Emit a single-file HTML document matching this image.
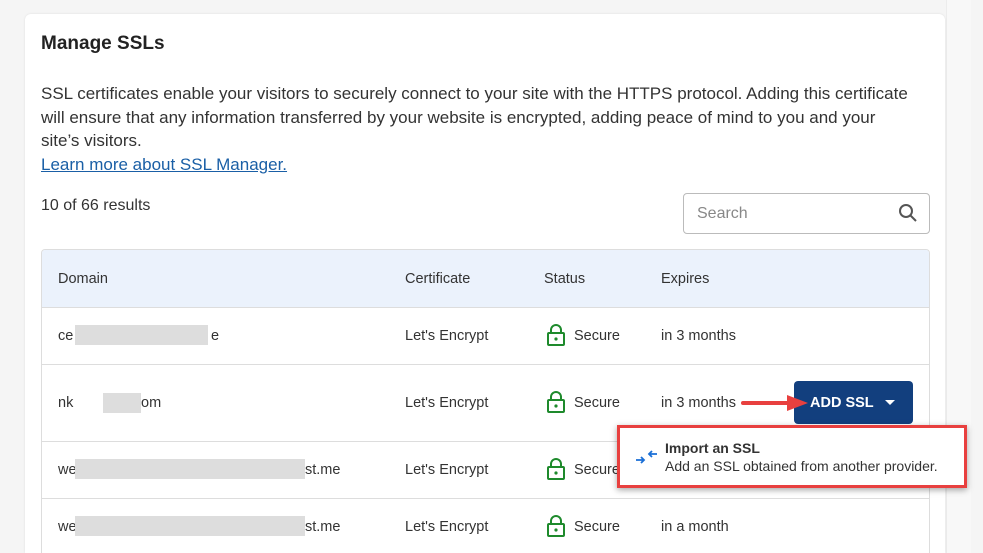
<!DOCTYPE html>
<html style="width:983px;height:553px;overflow:hidden"><head><style>
body{margin:0;width:983px;height:553px;overflow:hidden;background:#f5f5f5;font-family:"Liberation Sans",sans-serif;color:#222;position:relative}
.card{position:absolute;left:25px;top:14px;width:920px;height:539px;background:#fff;border-radius:6px 6px 0 0;box-shadow:0 0 2px rgba(0,0,0,.1)}
.strip{position:absolute;left:946px;top:0;width:24px;height:553px;background:#f8f8f8;border-left:1px solid #ececec}
.a{position:absolute;white-space:nowrap}
h1{position:absolute;left:41px;top:33px;margin:0;font-size:19px;font-weight:bold;color:#222}
.p{left:41px;top:82px;font-size:17px;line-height:23.7px;color:#333;white-space:normal;width:872px}
.link{color:#1a5fa6;text-decoration:underline}
.search{left:683px;top:193px;width:245px;height:39px;border:1px solid #bbb;border-radius:4px}
.tbl{position:absolute;left:41px;top:249px;width:887px;height:320px;border:1px solid #ddd;border-radius:4px;overflow:hidden}
.hd{position:absolute;left:0;top:0;width:100%;height:57px;background:#ebf2fc;border-bottom:1px solid #ddd}
.rl{position:absolute;left:0;width:100%;height:1px;background:#ddd}
.t{font-size:14.5px;color:#333}
.blur{position:absolute;height:20px;background:#ddd}
.btn{left:794px;top:381px;width:119px;height:43px;background:#123f7e;border-radius:4px;color:#fff;font-weight:bold;font-size:14.5px}
.menu{left:617px;top:425px;width:350px;height:63px;background:#fff;border:3px solid #e8403f;box-sizing:border-box;box-shadow:0 2px 6px rgba(0,0,0,.35)}
</style></head><body>
<div class="strip"></div>
<div class="card"></div>
<h1>Manage SSLs</h1>
<div class="a p">SSL certificates enable your visitors to securely connect to your site with the HTTPS protocol. Adding this certificate will ensure that any information transferred by your website is encrypted, adding peace of mind to you and your site’s visitors.<br><span class="link">Learn more about SSL Manager.</span></div>
<div class="a" style="left:41px;top:197px;font-size:16px;color:#333">10 of 66 results</div>
<div class="a search"><span class="a" style="left:13px;top:11px;font-size:16px;color:#888">Search</span>
<svg class="a" style="left:214px;top:9px" width="20" height="20" viewBox="0 0 20 20"><circle cx="8" cy="8" r="6" fill="none" stroke="#555" stroke-width="2"/><path d="M12.5 12.5L18 18" stroke="#555" stroke-width="2"/></svg></div>
<div class="tbl">
<div class="hd"></div>
<div class="rl" style="top:114px"></div><div class="rl" style="top:191px"></div><div class="rl" style="top:248px"></div>
</div>
<div class="a t" style="left:58px;top:271px">Domain</div>
<div class="a t" style="left:405px;top:271px">Certificate</div>
<div class="a t" style="left:544px;top:271px">Status</div>
<div class="a t" style="left:661px;top:271px">Expires</div>

<div class="a t" style="left:58px;top:328px">ce</div><div class="blur" style="left:75px;top:325px;width:133px"></div><div class="a t" style="left:211px;top:328px">e</div>
<div class="a t" style="left:58px;top:395px">nk</div><div class="blur" style="left:103px;top:393px;width:38px"></div><div class="a t" style="left:141px;top:395px">om</div>
<div class="a t" style="left:58px;top:462px">we</div><div class="blur" style="left:75px;top:459px;width:230px"></div><div class="a t" style="left:305px;top:462px">st.me</div>
<div class="a t" style="left:58px;top:519px">we</div><div class="blur" style="left:75px;top:516px;width:230px"></div><div class="a t" style="left:305px;top:519px">st.me</div>

<div class="a t" style="left:405px;top:328px">Let's Encrypt</div>
<div class="a t" style="left:405px;top:395px">Let's Encrypt</div>
<div class="a t" style="left:405px;top:462px">Let's Encrypt</div>
<div class="a t" style="left:405px;top:519px">Let's Encrypt</div>

<svg class="a" style="left:547px;top:324px" width="18" height="22" viewBox="0 0 18 22"><path d="M4 9V6a5 5 0 0 1 10 0v3" fill="none" stroke="#1e8a2c" stroke-width="2"/><rect x="1" y="9" width="16" height="12" rx="1" fill="none" stroke="#1e8a2c" stroke-width="2"/><circle cx="9" cy="15" r="1.6" fill="#1e8a2c"/></svg>
<div class="a t" style="left:574px;top:328px">Secure</div>
<svg class="a" style="left:547px;top:391px" width="18" height="22" viewBox="0 0 18 22"><path d="M4 9V6a5 5 0 0 1 10 0v3" fill="none" stroke="#1e8a2c" stroke-width="2"/><rect x="1" y="9" width="16" height="12" rx="1" fill="none" stroke="#1e8a2c" stroke-width="2"/><circle cx="9" cy="15" r="1.6" fill="#1e8a2c"/></svg>
<div class="a t" style="left:574px;top:395px">Secure</div>
<svg class="a" style="left:547px;top:458px" width="18" height="22" viewBox="0 0 18 22"><path d="M4 9V6a5 5 0 0 1 10 0v3" fill="none" stroke="#1e8a2c" stroke-width="2"/><rect x="1" y="9" width="16" height="12" rx="1" fill="none" stroke="#1e8a2c" stroke-width="2"/><circle cx="9" cy="15" r="1.6" fill="#1e8a2c"/></svg>
<div class="a t" style="left:574px;top:462px">Secure</div>
<svg class="a" style="left:547px;top:515px" width="18" height="22" viewBox="0 0 18 22"><path d="M4 9V6a5 5 0 0 1 10 0v3" fill="none" stroke="#1e8a2c" stroke-width="2"/><rect x="1" y="9" width="16" height="12" rx="1" fill="none" stroke="#1e8a2c" stroke-width="2"/><circle cx="9" cy="15" r="1.6" fill="#1e8a2c"/></svg>
<div class="a t" style="left:574px;top:519px">Secure</div>

<div class="a t" style="left:661px;top:328px">in 3 months</div>
<div class="a t" style="left:661px;top:395px">in 3 months</div>
<div class="a t" style="left:661px;top:519px">in a month</div>

<div class="a btn"><span class="a" style="left:16px;top:14px">ADD SSL</span><svg class="a" style="left:91px;top:19px" width="10" height="6"><path d="M0 0h10L5 5z" fill="#fff"/></svg></div>
<svg class="a" style="left:740px;top:394px" width="70" height="18" viewBox="0 0 70 18"><path d="M3 9H50" stroke="#e8403f" stroke-width="4" stroke-linecap="round"/><path d="M47 1L68 9L47 17z" fill="#e8403f"/></svg>

<div class="a menu">
<svg class="a" style="left:16px;top:22px" width="22" height="14" viewBox="0 0 22 14"><path d="M0 10H8M5 7l3 3-3 3" fill="none" stroke="#1a6fd6" stroke-width="1.8"/><path d="M21 4H13M16 1l-3 3 3 3" fill="none" stroke="#1a6fd6" stroke-width="1.8"/></svg>
<div class="a" style="left:45px;top:12px;font-size:14px;font-weight:bold;color:#333">Import an SSL</div>
<div class="a" style="left:45px;top:30px;font-size:14px;color:#333">Add an SSL obtained from another provider.</div>
</div>
</body></html>
